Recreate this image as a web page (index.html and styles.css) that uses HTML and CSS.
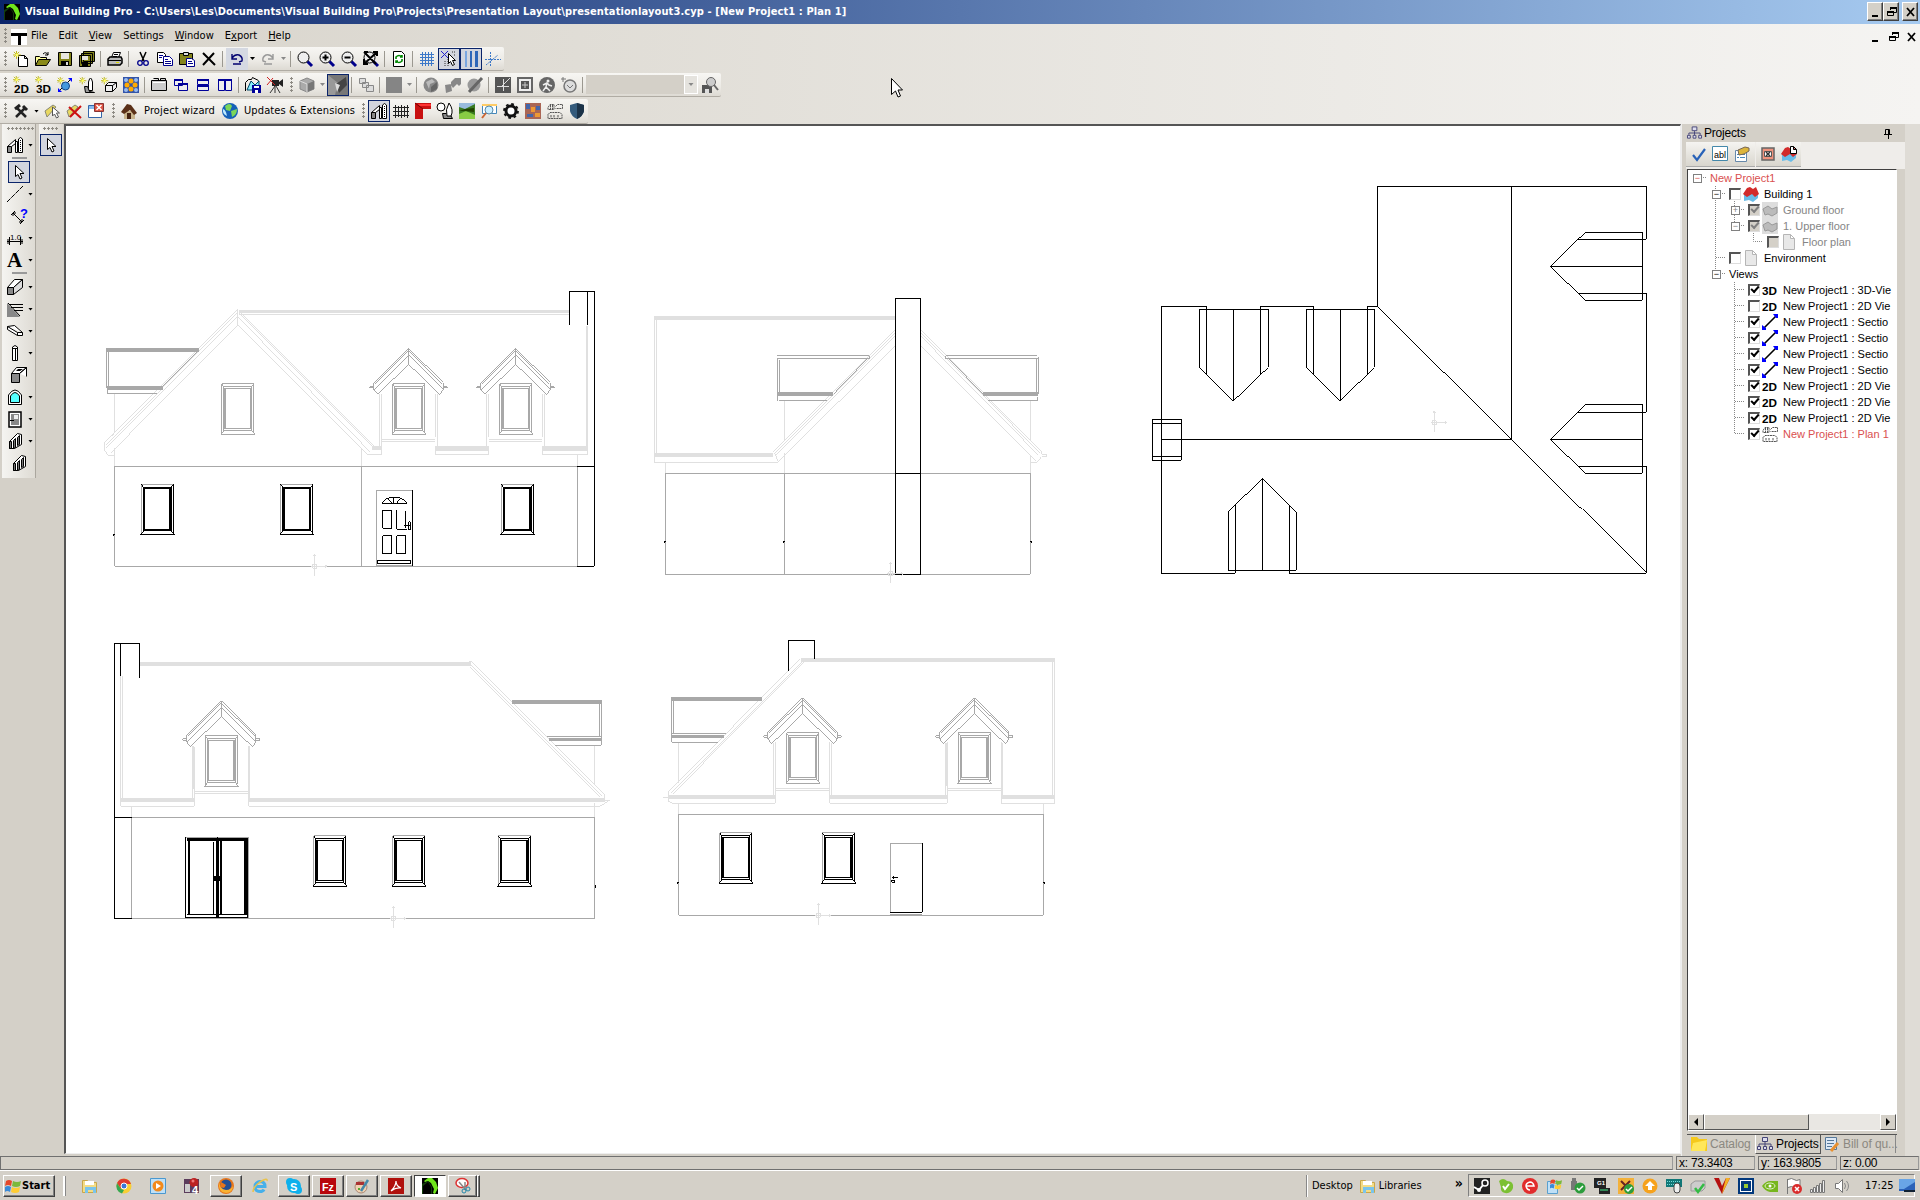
FILE: index.html
```html
<!DOCTYPE html>
<html lang="en">
<head>
<meta charset="utf-8">
<title>Visual Building Pro</title>
<link rel="stylesheet" href="styles.css">
</head>
<body>
<svg class="sprite" width="0" height="0">
<defs>
<symbol id="app" viewBox="0 0 16 16"><path fill="#000" d="M0 0h16v16H0z"/><path fill="#6fe61c" d="M2 3 6 0h4l4 4 2 6-3 6-2-1 1-4-3-6-3-2-3 1z"/><path fill="#123c0a" d="m0 6 6-3 4 6v7H0z"/><path d="m1 8 5-4 3 5v7H1z"/></symbol>
<symbol id="spark" viewBox="0 0 16 16"><path stroke="#b8b000" d="M4 0v9M0 4.500h9M1 1l6 6M7 1 1 7"/><path fill="#ff6" d="M3 3h3v3H3z"/></symbol>
<symbol id="new" viewBox="0 0 16 16"><path fill="#fff" stroke="#000" d="M5.500 4.500h6l3 3v8h-9zM11.500 4.500v3h3"/><use href="#spark" width="14" height="14"/></symbol>
<symbol id="open" viewBox="0 0 16 16"><path fill="#ff9" stroke="#000" d="M.5 14.500v-9h4l1 1h6v2"/><path fill="#8a8a18" stroke="#000" d="m.5 14.500 3-6h12l-4 6z"/><path fill="none" stroke="#000" d="M8 3q3-3 5 1m0-3v3h-3"/></symbol>
<symbol id="save" viewBox="0 0 16 16"><path fill="#84841c" stroke="#000" d="M1.500 1.500h13v13h-13z"/><path fill="#e8e6df" d="M4 2h8v6H4z"/><path d="M4 10h8v4H4z"/><path fill="#ddd" d="M9 11h2v3H9z"/></symbol>
<symbol id="saveall" viewBox="0 0 16 16"><path fill="#84841c" stroke="#000" d="M4.500.5h11v10h-11zM2.500 2.500h11v10h-11zM.5 4.500h11v11H.5z"/><path fill="#e8e6df" d="M3 5h6v4H3z"/><path d="M3 11h6v4H3z"/></symbol>
<symbol id="print" viewBox="0 0 16 16"><path fill="#fff" stroke="#000" d="m4.500 6.500 2-5h7l-2 5"/><path fill="#bbb" stroke="#000" stroke-width="1.500" d="M1 8l2-2h11l1 2v4l-2 2H1z"/><path stroke="#000" d="M1 9.500h13M7 3.500h4M6 5.500h4"/><path fill="#dd0" d="M9 11h3v1H9z"/></symbol>
<symbol id="cut" viewBox="0 0 16 16"><path stroke="#000" stroke-width="1.500" d="m5 1 4 9M11 1 7 10"/><g fill="none" stroke="#00008b" stroke-width="1.300"><circle cx="5" cy="12" r="2.300"/><circle cx="11" cy="12" r="2.300"/></g></symbol>
<symbol id="copy" viewBox="0 0 16 16"><path fill="#fff" stroke="#000" d="M.5 1.500h6l2 2v8h-8z"/><path fill="#fff" stroke="#00008b" d="M6.500 5.500h6l3 3v6h-9z"/><path stroke="#00008b" d="M2 4.500h4M2 6.500h3M8 8.500h3M8 10.500h6M8 12.500h6"/></symbol>
<symbol id="paste" viewBox="0 0 16 16"><path fill="#84841c" stroke="#000" d="M.5 2.500h13v11H.5z"/><path fill="#ddd" stroke="#000" d="M4.500 1.500h5v3h-5z"/><path fill="#fff" stroke="#00008b" d="M7.500 7.500h5l3 2v6h-8z"/><path stroke="#00008b" d="M9 10.500h4M9 12.500h5"/></symbol>
<symbol id="del" viewBox="0 0 16 16"><path stroke="#000" stroke-width="2" d="m2 2 12 12M13 2 2 14"/></symbol>
<symbol id="undo" viewBox="0 0 16 16"><path fill="none" stroke="currentColor" stroke-width="1.400" d="M3 7q3-4 7-3 4 2 3 6l-3 1M3 3v5h5M4 13h8"/></symbol>
<symbol id="mag" viewBox="0 0 16 16"><path stroke="#00008b" stroke-width="3" d="m10 10 5 5"/><circle cx="6.500" cy="6.500" r="5.500" fill="#eee" stroke="#000"/></symbol>
<symbol id="magp" viewBox="0 0 16 16"><use href="#mag"/><path stroke="#000" stroke-width="2" d="M3.500 6.500h6M6.500 3.500v6"/></symbol>
<symbol id="magm" viewBox="0 0 16 16"><use href="#mag"/><path stroke="#000" stroke-width="2" d="M3.500 6.500h6"/></symbol>
<symbol id="maga" viewBox="0 0 16 16"><use href="#mag"/><path stroke="#000" stroke-width="2" d="m1 1 12 12M14 1 1 13M1 1h4M10 1h4v4M1 8v5h4"/></symbol>
<symbol id="refresh" viewBox="0 0 16 16"><path fill="#fff" stroke="#000" d="M2.500.5h8l3 3v12h-11z"/><path fill="none" stroke="#080" stroke-width="1.600" d="M5 8V6q3-3 6 0M9 6h2V4M11 8v2q-3 3-6 0m2 0H5v2"/></symbol>
<symbol id="grid" viewBox="0 0 16 16"><path stroke="#3c78c8" d="M1 3.500h14M1 6.500h14M1 9.500h14M1 12.500h14M3.500 1v14M6.500 1v14M9.500 1v14M12.500 1v14"/></symbol>
<symbol id="snap" viewBox="0 0 16 16"><path stroke="#22c" d="m0 0 7 7M7 0 0 7"/><path stroke="#333" stroke-dasharray="1 1" d="M4 15V9M7 15V8M11 1h4M13 4h2"/><path fill="#fff" stroke="#000" d="m7.500 2.500 0 10 2-2 2 4 2-1-2-4h3z"/></symbol>
<symbol id="cols" viewBox="0 0 16 16"><path fill="#7aa6e0" d="M2 0h2v16H2z"/><path fill="#2e66b8" d="M7 0h2v16H7zM12 0h3v16h-3z"/></symbol>
<symbol id="axis" viewBox="0 0 16 16"><path stroke="#3c78c8" stroke-dasharray="2 1" d="M5.500 1v14M0 8.500h16M1 14 13 4"/></symbol>
<symbol id="d2" viewBox="0 0 16 16"><use href="#spark" y="-1" width="13" height="13"/><text class="it" x="1" y="16" textLength="15" lengthAdjust="spacingAndGlyphs">2D</text></symbol>
<symbol id="d3" viewBox="0 0 16 16"><use href="#spark" y="-1" width="13" height="13"/><text class="it" x="1" y="16" textLength="15" lengthAdjust="spacingAndGlyphs">3D</text></symbol>
<symbol id="sec" viewBox="0 0 16 16"><use href="#spark" width="13" height="13"/><path stroke="#000" d="M2 14 14 2"/><circle cx="8.500" cy="9" r="4" fill="#49d" stroke="#148"/><path fill="#00f" d="M11 1h4v4zM1 11v4h4z"/></symbol>
<symbol id="plan" viewBox="0 0 16 16"><use href="#spark" width="13" height="13"/><path fill="#fff" stroke="#000" d="M9.500 13.500V5q2-8 4 0v8.500z"/><path fill="#999" stroke="#000" d="M5.500 9.500h3l2 5 5 1h-9z"/></symbol>
<symbol id="box" viewBox="0 0 16 16"><use href="#spark" width="13" height="13"/><path fill="#eee" stroke="#000" d="m4.500 8.500 3-3h8v5l-4 4h-7zM4.500 8.500h7v6m0-6 4-3"/></symbol>
<symbol id="dots" viewBox="0 0 16 16"><path fill="#35a" d="M0 0h16v16H0z"/><g fill="#9be"><circle cx="3" cy="3" r="2"/><circle cx="13" cy="3" r="2"/><circle cx="3" cy="13" r="2"/><circle cx="13" cy="13" r="2"/></g><g fill="#fa0"><circle cx="8" cy="4" r="2.500"/><circle cx="4" cy="8" r="2.500"/><circle cx="12" cy="8" r="2.500"/><circle cx="8" cy="12" r="2.500"/></g></symbol>
<symbol id="win1" viewBox="0 0 16 16"><path fill="#ccc" stroke="#000" d="M.5 3.500h15v10H.5zM2.500 1.500h5v2M9.500 3.500v-2h5v2"/><path stroke="#fff" d="M2 5.500h12"/></symbol>
<symbol id="casc" viewBox="0 0 16 16"><path fill="#eee" stroke="#009" d="M1.500 2.500h8v6h-8zM5.500 6.500h9v7h-9z"/><path stroke="#009" stroke-width="2" d="M1 3h9M5 7h10"/></symbol>
<symbol id="horz" viewBox="0 0 16 16"><path fill="#eee" stroke="#009" d="M2.500 2.500h11v5h-11zM2.500 9.500h11v4h-11z"/><path stroke="#009" stroke-width="2" d="M2 3h12M2 9h12"/></symbol>
<symbol id="vert" viewBox="0 0 16 16"><path fill="#eee" stroke="#009" d="M1.500 2.500h6v11h-6zM8.500 2.500h6v11h-6z"/><path stroke="#009" stroke-width="2" d="M1 3h14"/></symbol>
<symbol id="pic" viewBox="0 0 16 16"><path fill="none" stroke="#000" d="M.5 14V5.500l3-3h3l1-2 6 3"/><path fill="#8ef" stroke="#046" d="m2 13 4-9 4 4 4-4v9z"/><path fill="#009" d="M7 8h9v8H7z"/><path fill="#fff" d="M9 9h5v2H9zM10 13h3v3h-3z"/></symbol>
<symbol id="cam" viewBox="0 0 16 16"><path fill="#222" d="M5 3h7v6H5zM12 5l4-3v8l-4-3z"/><path stroke="#333" d="M8 9 3 16M9 9l4 7M8 9v7"/><path stroke="#c22" d="m0 0 8 8M6 1 0 8"/></symbol>
<symbol id="cube" viewBox="0 0 16 16"><path fill="#aaa" stroke="#888" d="m1 4 7-3 7 3v8l-7 3-7-3z"/><path fill="#777" d="m8 7 7-3v8l-7 3z"/><path stroke="#ddd" d="M1 4l7 3v8"/></symbol>
<symbol id="gpic" viewBox="0 0 20 20"><path fill="#777" d="M0 0h20v20H0z"/><path fill="#999" d="m0 0 10 8-3 12H0z"/><path fill="#444" d="m8 9 10-7 1 8-8 8z"/><path fill="#ddd" d="m7 8 5 2-3 7z"/></symbol>
<symbol id="gcasc" viewBox="0 0 16 16"><path fill="#ddd" stroke="#888" d="M1.500 1.500h6v5h-6zM4.500 5.500h6v5h-6zM8.500 8.500h7v6h-7z"/></symbol>
<symbol id="gsq" viewBox="0 0 16 16"><path fill="#858585" d="M0 0h16v16H0z"/></symbol>
<symbol id="gball" viewBox="0 0 16 16"><circle cx="8" cy="8" r="7.500" fill="#888"/><path fill="#bbb" d="M3 5 9 2l3 3-5 2-1 5z"/><path fill="#666" d="m8 10 6-5v7l-6 3z"/></symbol>
<symbol id="garr" viewBox="0 0 16 16"><path fill="#888" d="m0 8 6-1 1 7-6 2zM6 5 10 1h6v6l-2 2-2-2-4 4-2-3z"/></symbol>
<symbol id="gpen" viewBox="0 0 16 16"><circle cx="7" cy="8" r="6.500" fill="#999"/><path stroke="#666" stroke-width="3" d="M2 15 15 1"/></symbol>
<symbol id="gax" viewBox="0 0 16 16"><path fill="#555" d="M0 0h16v16H0z"/><path stroke="#ddd" d="M8.500 2v12M2 9.500h12M7 9l8-8"/></symbol>
<symbol id="gtar" viewBox="0 0 16 16"><path fill="#eee" stroke="#666" stroke-width="2" d="M1 1h14v14H1z"/><path fill="#555" d="M4 4h8v8H4z"/><path stroke="#ccc" d="M8 5v6M5 8h6"/></symbol>
<symbol id="gwalk" viewBox="0 0 16 16"><circle cx="8" cy="8" r="8" fill="#666"/><circle cx="9" cy="4" r="1.500" fill="#eee"/><path fill="none" stroke="#eee" stroke-width="1.500" d="M4 8l4-2 2 2 3 1M8 6l-1 4-3 4M7 10l4 4"/></symbol>
<symbol id="gclk" viewBox="0 0 16 16"><circle cx="9" cy="9" r="6" fill="#ddd" stroke="#777" stroke-width="1.500"/><path stroke="#777" d="M6 8l3 3 3-3M0 2h5M2 0v5"/></symbol>
<symbol id="gfind" viewBox="0 0 16 16"><path fill="#555" d="M0 8h10v8H0z"/><path fill="#ddd" d="M3 12h4v4H3z"/><circle cx="9" cy="5" r="4.500" fill="#ccc" stroke="#666"/><path stroke="#666" stroke-width="2" d="m12 8 4 5"/></symbol>
<symbol id="ham" viewBox="0 0 16 16"><path stroke="#222" stroke-width="2.500" d="M4 5l9 9M12 5 3 14"/><path stroke="#222" stroke-width="3" d="M2 6l5-4M10 3l4 4"/></symbol>
<symbol id="ycur" viewBox="0 0 16 16"><path fill="#e8d860" stroke="#887" d="m1 8 8-6 3 2-9 10z"/><path fill="#fff" stroke="#555" d="M8.500 4v9l2-2 2 4 2-1-2-4h3z"/></symbol>
<symbol id="ydel" viewBox="0 0 16 16"><path fill="#e8d860" stroke="#887" d="m1 8 8-6 3 2-9 10z"/><path stroke="#c11" stroke-width="2" d="m3 4 12 11M15 3 4 14"/></symbol>
<symbol id="wclose" viewBox="0 0 16 16"><path fill="#fff" stroke="#36a" d="M.5 2.500h13v12H.5z"/><path fill="#8be" d="M1 3h12v3H1z"/><path fill="#d54" stroke="#833" d="M6.500.5h9v8h-9z"/><path stroke="#fff" stroke-width="1.500" d="m8.500 2 5 5m0-5-5 5"/></symbol>
<symbol id="house" viewBox="0 0 16 16"><path fill="#c8b48c" d="M3 8h11v8H3z"/><path fill="#5a3018" d="M0 9 6 1l4 1 6 8-3 2-4-5-6 4z"/><path fill="#421" d="M6 10h4v6H6z"/></symbol>
<symbol id="globe" viewBox="0 0 16 16"><circle cx="8" cy="8" r="8" fill="#1560b8"/><path fill="#7cd65a" d="M3 3q5-4 7 0L8 8 4 7zM9 8l6-2q0 6-5 8z"/><path fill="#bdeaff" d="M1 6q3 1 4 7Q0 11 1 6z"/></symbol>
<symbol id="walls" viewBox="0 0 16 16"><path fill="#888" stroke="#000" d="M.5 9.500h4v6h-4z"/><path fill="#fff" stroke="#000" d="m.5 9.500 8-7v4l-4 3zM8.500 4.500h2v11h-2z"/><path fill="#fff" stroke="#000" d="M11.500 2q2-3 4 0v13.500h-4z"/><path stroke="#000" stroke-dasharray="1 1" d="M13.500 3v12"/></symbol>
<symbol id="fence" viewBox="0 0 16 16"><path stroke="#222" d="M0 4.500h16M0 8.500h16M0 12.500h16M2.500 2v13M5.500 3v11M8.500 2v13M11.500 3v11M14.500 2v13"/></symbol>
<symbol id="roof" viewBox="0 0 16 16"><path fill="#c81010" d="M0 0h16v6H8v10H0z"/><path stroke="#700" d="m0 0 8 6"/><path fill="#f33" d="M3 1h13v2H5z"/></symbol>
<symbol id="tree" viewBox="0 0 16 16"><circle cx="4" cy="4" r="4" fill="#fff" stroke="#000"/><path fill="#888" stroke="#000" d="M5.500 10.500h7l3 5h-9z"/><path fill="#fff" stroke="#000" d="M12 0q5 7 2 13h-4q-2-6 2-13"/></symbol>
<symbol id="land" viewBox="0 0 16 16"><path fill="#9bd" d="M0 0h16v16H0z"/><path fill="#3a7a20" d="m0 4 6 2 10-5v15H0z"/><path fill="#8c4" d="m0 11 7-3 9 4v4H0z"/><path fill="#240" d="M0 8l6-2 9-1v4l-9-1z"/></symbol>
<symbol id="wmag" viewBox="0 0 16 16"><path fill="#fff" stroke="#48b" d="M1.500 1.500h14v9h-14z"/><path fill="#fc6" d="M1 1h15v2H1z"/><circle cx="8" cy="7" r="4" fill="#cef" stroke="#58a"/><path stroke="#c63" stroke-width="2" d="m5 10-4 5"/></symbol>
<symbol id="gear" viewBox="0 0 16 16"><circle cx="8" cy="8" r="5" fill="#fff" stroke="#111" stroke-width="3"/><circle cx="8" cy="8" r="7" fill="none" stroke="#111" stroke-width="1.800" stroke-dasharray="2.700 2.800"/></symbol>
<symbol id="quilt" viewBox="0 0 16 16"><path fill="#a65" d="M0 0h16v16H0z"/><path fill="#46a" d="M1 1h4v5H1zM11 3h4v4h-4zM2 11h6v3H2z"/><path fill="#e93" d="M6 4h4v5H6zM10 10h5v4h-5z"/></symbol>
<symbol id="lay" viewBox="0 0 16 16"><path fill="none" stroke="#555" stroke-dasharray="2 .6" d="m1 4.500 2-3h4v5H1zM8.500 3.500l2-2h5v4h-7M1 11.500l2-2h10l2 2v4H1zM4 12v3M7 12v3M11 12v3M3.500 2v4M5.500 2v4"/></symbol>
<symbol id="shield" viewBox="0 0 16 16"><path fill="#345b7c" d="m8 0 7 2v6q-1 5-7 8-6-3-7-8V2z"/><path fill="#1c3348" d="m8 0 7 2v6q-1 5-7 8z"/></symbol>
<symbol id="arrow" viewBox="0 0 16 16"><path fill="#fff" stroke="#000" d="M4.500 1.500v11l2.500-2 2 4.500 2-1-2-4.500h4z"/></symbol>
<symbol id="line" viewBox="0 0 16 16"><path stroke="#000" stroke-dasharray="5 1" d="M0 16 16 0"/></symbol>
<symbol id="dim" viewBox="0 0 16 16"><path stroke="#000" d="M2 5l9 9M0 7l4-4M9 16l4-4M2 5h3M2 5v3M11 14v-3M11 14H8"/><text class="q" x="9" y="10">?</text></symbol>
<symbol id="meas" viewBox="0 0 16 16"><path stroke="#000" d="M0 11.500h16M2.500 7v8M13.500 7v8M1 9v5M15 9v5"/><text class="m" x="3" y="10">1.0</text></symbol>
<symbol id="bigA" viewBox="0 0 16 16"><text class="A" x="0" y="15">A</text></symbol>
<symbol id="wall" viewBox="0 0 16 16"><path fill="#fff" stroke="#000" d="m.5 8.500 7-8h8l-9 8z"/><path fill="#ddd" stroke="#000" d="m6.500 8.500 9-8v8l-9 7z"/><path fill="#888" stroke="#000" d="M.5 8.500h6v7h-6z"/></symbol>
<symbol id="roofl" viewBox="0 0 16 16"><path fill="#888" d="M0 2v14h13z"/><path stroke="#000" d="M1 2l12 13M2 3.500h14M4 6.500h12M7 9.500h9"/></symbol>
<symbol id="slab" viewBox="0 0 16 16"><path fill="#fff" stroke="#000" d="m.5 3.500 7-1 8 7v3h-5l-10-6zM.5 3.500l10 6h5M10.500 9.500v3"/></symbol>
<symbol id="post" viewBox="0 0 16 16"><path fill="#fff" stroke="#000" d="M5.500 2q2.500-3 5 0v13.500h-5z"/><path stroke="#000" d="M8.500 3v12M6 3.500h4"/></symbol>
<symbol id="open3" viewBox="0 0 16 16"><path fill="#888" stroke="#000" d="M.5 6.500h8v9h-8z"/><path fill="#fff" stroke="#000" d="m.5 6.500 5-6h10l-7 6zM8.500 6.500l7-6v9"/><path d="m5 4 2-2h5l-3 2z"/></symbol>
<symbol id="arch" viewBox="0 0 16 16"><path fill="#fff" stroke="#000" d="M1.500 15.500V6q6.500-10 13 0v9.500z"/><path fill="#5ff" stroke="#000" d="M3.500 13.500V7q4.500-7 9 0v6.500z"/></symbol>
<symbol id="door" viewBox="0 0 16 16"><path fill="#fff" stroke="#000" stroke-width="1.500" d="M2 1h12v15H2z"/><path fill="#888" d="M4 3h8v11H4z"/><path fill="#eee" d="M7 4h4v4H7z"/><path d="M3 9h4v1H3z"/></symbol>
<symbol id="stair" viewBox="0 0 16 16"><path fill="#fff" stroke="#000" d="m2.500 8.500 8-8 4 1v10l-7 4h-5z"/><path fill="#777" stroke="#000" d="M2.500 8.500h2v7h-2zM6.500 7.500l2-2v9l-2 1zM10.500 4.500l2-2v9l-2 1z"/></symbol>
<symbol id="fl" viewBox="0 0 16 16"><path fill="#69bce8" d="m1 8 5-3 4 3 5-2v6l-5 4-4-2-5 1z"/><path fill="#d22b2b" d="m0 8 4-6 3-1 3 2 3-2 3 7-4 3-3-3-5 3z"/></symbol>
<symbol id="flg" viewBox="0 0 16 16"><path fill="#ddd" d="M0 0h16v16H0z"/><path fill="#bbb" stroke="#999" d="m1 7 5-3 4 3 5-2v6l-5 3-4-2-3 1z"/></symbol>
<symbol id="page" viewBox="0 0 16 16"><path fill="#e8e8e8" stroke="#b5b5b5" d="M2.500.5h7l4 4v11h-11zM9.500.5v4h4"/></symbol>
<symbol id="t3" viewBox="0 0 16 16"><text class="it" x="0" y="13" textLength="15" lengthAdjust="spacingAndGlyphs">3D</text></symbol>
<symbol id="t2" viewBox="0 0 16 16"><text class="it" x="0" y="13" textLength="15" lengthAdjust="spacingAndGlyphs">2D</text></symbol>
<symbol id="sl" viewBox="0 0 16 16"><path stroke="#000" stroke-width="1.600" d="M1 15 15 1"/><path fill="#00f" d="M11 0h5v4h-2zM0 11v5h4v-2z"/></symbol>
<symbol id="org" viewBox="0 0 16 16"><path fill="#dde" stroke="#447" d="M5.500 1.500h5v4h-5zM.5 10.500h3v3h-3zM6.500 10.500h3v3h-3zM12.500 10.500h3v3h-3z"/><path fill="none" stroke="#447" d="M8 6v4M2 10V8h12v2"/></symbol>
<symbol id="tick" viewBox="0 0 16 16"><path fill="none" stroke="#2862b8" stroke-width="2.200" d="m2 9 4 5 8-11"/></symbol>
<symbol id="abl" viewBox="0 0 16 16"><path fill="#fff" stroke="#48a" d="M.5.5h15v14H.5z"/><text class="ab" x="2" y="12">abl</text></symbol>
<symbol id="prop" viewBox="0 0 16 16"><path fill="#fff" stroke="#68a" d="M1.500 4.500h11v11h-11z"/><path stroke="#48b" d="M3 8.500h2M6 8.500h5M3 11.500h2M6 11.500h5"/><path fill="#dcb53c" stroke="#765" d="m4 4 7-3 4 1v3l-5 3-5 1z"/></symbol>
<symbol id="rx" viewBox="0 0 16 16"><path fill="#ef927c" stroke="#666" stroke-width="1.500" d="M2 2h12v12H2z"/><path fill="#fff" stroke="#555" d="M4.500 5.500h7v5h-7z"/><path stroke="#333" stroke-width="1.500" d="m6 6 4 4m0-4-4 4"/></symbol>
<symbol id="flp" viewBox="0 0 16 16"><use href="#fl"/><path fill="#fff" stroke="#000" d="M9.500.5h3l3 3v4h-6zM12.500.5v3h3"/></symbol>
<symbol id="folder" viewBox="0 0 16 16"><path fill="#f6c91c" d="M0 1h6l2 2h8v12H0z"/><path fill="#ffe75a" d="m2 7 14-3-2 11H0z"/></symbol>
<symbol id="bill" viewBox="0 0 16 16"><path fill="#dce8f6" stroke="#579" d="M1.500 1.500h11v12h-11z"/><path stroke="#579" d="M3 4.500h7M3 7.500h7M3 10.500h5"/><path stroke="#e89030" stroke-width="3" d="m7 15 7-8"/></symbol>
<symbol id="flag" viewBox="0 0 16 16"><path fill="#e6482a" d="M1 3q3-2 6 0L6 8Q3 6 0 8z"/><path fill="#7bb93c" d="M8 3q4 2 8 0l-1 5q-4 2-8 0z"/><path fill="#3a8ad8" d="M0 9q3-2 6 0l-1 5q-3-2-5 0z"/><path fill="#fc3" d="M7 9q3 2 8 0l-1 5q-4 2-8 0z"/></symbol>
<symbol id="expl" viewBox="0 0 16 16"><path fill="#f3dc86" stroke="#c9a64a" d="M.5 2.500h5l1 2h8v10H.5z"/><path fill="#fff" d="M3 3h9v4H3z"/><path fill="#79c4ec" d="M3 9h11v6h-3v-3H6v3H3z"/></symbol>
<symbol id="chrome" viewBox="0 0 16 16"><circle cx="8" cy="8" r="7.500" fill="#f8cf35"/><path fill="#e03c31" d="M1 5a7.500 7.500 0 0 1 14 1H8l-3 5z"/><path fill="#36a852" d="m1 5 4 6 3 1-2 3.500A7.500 7.500 0 0 1 1 5"/><circle cx="8" cy="8" r="3" fill="#3b78d8" stroke="#fff"/></symbol>
<symbol id="wmp" viewBox="0 0 16 16"><path fill="#bfe0f7" stroke="#4a98cf" d="M.5.5h15v15H.5z"/><circle cx="8" cy="8" r="5.500" fill="#f18a1d"/><path fill="#fff" d="m6 5 5 3-5 3z"/></symbol>
<symbol id="p4" viewBox="0 0 16 16"><path fill="#5b3c5c" d="M0 1h15v14H0z"/><path fill="#ccc" d="M1 6h5v8H1z"/><circle cx="10" cy="4.500" r="4.500" fill="#b22"/><circle cx="9" cy="3" r="1.500" fill="#e77"/><text class="w" x="8" y="16">4</text></symbol>
<symbol id="ff" viewBox="0 0 16 16"><circle cx="8" cy="8" r="8" fill="#e8761b"/><circle cx="8" cy="7" r="5.500" fill="#234f93"/><path fill="#f9b233" d="M1 4q1 7 7 8 6 0 7-5 0 8-7 8Q0 15 1 4"/><path fill="#e8761b" d="m3 4 5 3-2 3-4-1z"/></symbol>
<symbol id="ie" viewBox="0 0 16 16"><path fill="none" stroke="#46b0ea" stroke-width="3" d="M3 8.500h10q0-5-5-5-5 1-5 5 0 5 5 5 3 0 4-2"/><path fill="none" stroke="#eac34a" stroke-width="1.500" d="M1 14Q1 9 8 4q8-5 7-1"/></symbol>
<symbol id="skype" viewBox="0 0 16 16"><circle cx="8" cy="8" r="7" fill="#0db0ec"/><circle cx="4" cy="4" r="4" fill="#0db0ec"/><circle cx="12" cy="12" r="4" fill="#0db0ec"/><text class="w" x="4" y="12.500">S</text></symbol>
<symbol id="fz" viewBox="0 0 16 16"><path fill="#b8060c" d="M0 0h16v16H0z"/><text class="w" x="2" y="12.500" textLength="12" lengthAdjust="spacingAndGlyphs">Fz</text></symbol>
<symbol id="paint" viewBox="0 0 16 16"><circle cx="7" cy="9" r="6" fill="#f0d2b0" stroke="#a87"/><path fill="#a33" d="M2 4h8v3H2z"/><path stroke="#48a" stroke-width="2.500" d="m7 13 7-11"/><path fill="#5a3" d="M4 10h2v2H4z"/></symbol>
<symbol id="pdf" viewBox="0 0 16 16"><path fill="#b0100c" d="M0 0h16v16H0z"/><path fill="none" stroke="#fff" stroke-width="1.200" d="M3 13Q8 8 8 3q0 5 5 7-5-1-10 3"/></symbol>
<symbol id="snip" viewBox="0 0 16 16"><ellipse cx="7" cy="5" rx="6" ry="4.500" fill="#fff" stroke="#d33" stroke-width="1.500"/><path stroke="#888" stroke-width="1.500" d="m4 4 7 8M10 4l0 8"/><circle cx="9" cy="13" r="2" fill="none" stroke="#28a"/><circle cx="13" cy="11" r="2" fill="none" stroke="#28a"/></symbol>
<symbol id="steam" viewBox="0 0 16 16"><path fill="#222" d="M0 0h16v16H0z"/><circle cx="11" cy="5" r="3" fill="none" stroke="#fff" stroke-width="1.500"/><circle cx="5" cy="12" r="2" fill="#fff"/><path stroke="#fff" stroke-width="2" d="m0 9 5 3 4-5"/></symbol>
<symbol id="gchk" viewBox="0 0 16 16"><path fill="#7cc033" d="M1 3q4-4 8 0 7 0 6 7-2 6-8 5-5-1-4-6z"/><path fill="none" stroke="#fff" stroke-width="2" d="m5 8 2 3 4-5"/></symbol>
<symbol id="red" viewBox="0 0 16 16"><circle cx="8" cy="8" r="8" fill="#e12c2c"/><path fill="none" stroke="#fff" stroke-width="1.500" d="M4 8h8q-1-4-4-4-4 1-4 4 1 4 4 4"/></symbol>
<symbol id="wu" viewBox="0 0 16 16"><path fill="#bfe0f7" stroke="#5aa0cf" d="M1.500 3.500h10v12h-10z"/><svg x="4" y="0" width="12" height="12" viewBox="0 0 16 16"><use href="#flag"/></svg></symbol>
<symbol id="usb" viewBox="0 0 16 16"><path fill="#777" d="M1 3h6v9H1zM2 0h4v3H2z"/><circle cx="10" cy="10" r="5.500" fill="#2c9c3c"/><path fill="none" stroke="#fff" stroke-width="1.500" d="m7 10 2 2 4-4"/></symbol>
<symbol id="g1" viewBox="0 0 16 16"><path fill="#222" d="M0 0h12v10H0zM5 10h11v6H5z"/><path fill="#385" d="M6 11h8v2H6z"/><text class="s" x="3" y="7">G1</text></symbol>
<symbol id="bird" viewBox="0 0 16 16"><path fill="#f3b13a" d="M0 0h16v16H0z"/><path stroke="#622" stroke-width="2" d="m3 3 9 9M12 3 3 12"/><circle cx="11" cy="11" r="5" fill="#2c9c3c"/><path fill="none" stroke="#fff" stroke-width="1.500" d="m8 11 2 2 4-4"/></symbol>
<symbol id="up" viewBox="0 0 16 16"><circle cx="8" cy="8" r="7.500" fill="#f6a21c"/><path fill="#fff" d="m8 3 5 5h-3v4H6V8H3z"/></symbol>
<symbol id="kb" viewBox="0 0 16 16"><path fill="#177" d="M0 1h16v8H0z"/><path stroke="#7dd" stroke-dasharray="1 1" d="M1 3.500h14M1 6.500h14"/><rect x="8" y="5" width="6" height="10" rx="3" fill="#eee" stroke="#444"/></symbol>
<symbol id="drv" viewBox="0 0 16 16"><path fill="#ccc" stroke="#999" d="m1 6 4-3h10v7l-3 3H1z"/><path fill="none" stroke="#3b4" stroke-width="2.500" d="m5 10 3 4 6-8"/></symbol>
<symbol id="vv" viewBox="0 0 16 16"><path fill="#b41010" d="M0 0h5l3 8 4-8h4L8 16z"/><path fill="#f4b024" d="m12 0h4L8 16l1-5z"/></symbol>
<symbol id="bsq" viewBox="0 0 16 16"><path fill="#fff" stroke="#02387c" stroke-width="2" d="M1 1h14v14H1z"/><path fill="#02387c" d="M3 3h10v10H3z"/><path fill="#9c3" d="M6 6h4v4H6z"/></symbol>
<symbol id="nv" viewBox="0 0 16 16"><path fill="#77b61d" d="M0 8q4-5 8-5h8v11H8Q3 13 0 8"/><ellipse cx="8" cy="8" rx="5" ry="3" fill="none" stroke="#dec"/><circle cx="8" cy="8" r="1.500" fill="#fff"/></symbol>
<symbol id="fx" viewBox="0 0 16 16"><path fill="#fff" stroke="#777" d="M1.500 1v15M2 1.500q4-2 6 0t6 0v8q-4 2-6 0t-6 0"/><circle cx="11" cy="11" r="5" fill="#d92c2c"/><path stroke="#fff" stroke-width="1.500" d="m9 9 4 4m0-4-4 4"/></symbol>
<symbol id="sig" viewBox="0 0 16 16"><path fill="#eee" stroke="#777" d="M.5 11.500h2v3h-2zM3.500 9.500h2v5h-2zM6.500 7.500h2v7h-2zM9.500 5.500h2v9h-2zM12.500 2.500h2v12h-2z"/></symbol>
<symbol id="spk" viewBox="0 0 16 16"><path fill="#fff" stroke="#777" d="M1.500 5.500h3l4-4v13l-4-4h-3z"/><path fill="none" stroke="#888" d="M10.500 5q2 3 0 6M12.500 3q4 5 0 10"/></symbol>
<symbol id="desk" viewBox="0 0 16 16"><path fill="#2b62b8" d="M0 1h16v12H0z"/><path fill="#69a5e6" d="m0 1 16 0v3L5 11H0z"/><path fill="#123" d="M5 12h11v2H5z"/></symbol>
<symbol id="min" viewBox="0 0 16 16"><path d="M4 11h6v2H4z"/></symbol>
<symbol id="rest" viewBox="0 0 16 16"><path fill="none" stroke="#000" d="M6.500 6V3.500h6v5H10M3.500 7.500h6v4h-6z"/><path stroke="#000" stroke-width="2" d="M6 4h7M3 8h7"/></symbol>
<symbol id="x" viewBox="0 0 16 16"><path stroke="#000" stroke-width="1.800" d="m4 4 7 8M11 4 4 12"/></symbol>

<g id="win">
<path class="mid" d="M0 149V0H97"/><path d="M97 0V145M-3 152H101M0 0 6 9M97 0 90 9M7 140-2 151M90 140 100 151M7 9H90V140H7Z"/><path stroke-width="6" d="M9 12V136M87 12V136"/><path d="M10 14H86M7 135H90"/>
</g>
<g id="dormer">
<path class="lt" d="M-86 137V295M-82 137V265M82 137V265M86 137V295M-80 273H80M-80 280H80"/>
<path class="mid" d="M-2 2-104 103V124L-93 138 0 48 93 138 104 124V103L2 2M0 7-100 106M0 7 100 106M0 20-104 124M0 20 104 124M0 0V48M-104 115H-116V119H-104M104 115H116V119H104"/>
<use href="#win" class="grey" x="-48" y="106"/>
</g>
<g id="origin"><path class="lt" d="M0-36V28M-10 0H38M-6-6H6V6H-6ZM-4-30 0-36 4-30M32-4 38 0 32 4"/></g>
</defs>
</svg>

<header class="title"><svg class="i"><use href="#app"/></svg><span class="cap">Visual Building Pro - C:\Users\Les\Documents\Visual Building Pro\Projects\Presentation Layout\presentationlayout3.cyp - [New Project1 : Plan 1]</span>
<div class="wb"><b><svg class="i"><use href="#min"/></svg></b><b><svg class="i"><use href="#rest"/></svg></b><b class="cl"><svg class="i"><use href="#x"/></svg></b></div></header>

<div class="bars">
<nav class="menu"><i class="grip"></i><svg class="mi" viewBox="0 0 16 16"><path fill="#fff" d="M0 0h16v16H0z"/><path d="M0 4h16v3H0zM7 7h3v9H7z"/></svg><span>File</span><span>Edit</span><span><u>V</u>iew</span><span>Settings</span><span><u>W</u>indow</span><span>E<u>x</u>port</span><span><u>H</u>elp</span>
<div class="mdi"><svg class="i"><use href="#min"/></svg><svg class="i"><use href="#rest"/></svg><svg class="i"><use href="#x"/></svg></div></nav>

<div class="tb">
<i class="grip"></i><b><svg class="i"><use href="#new"/></svg></b><b><svg class="i"><use href="#open"/></svg></b><b><svg class="i"><use href="#save"/></svg></b><b><svg class="i"><use href="#saveall"/></svg></b><i class="sep"></i><b><svg class="i"><use href="#print"/></svg></b><i class="sep"></i><b><svg class="i"><use href="#cut"/></svg></b><b><svg class="i"><use href="#copy"/></svg></b><b><svg class="i"><use href="#paste"/></svg></b><b><svg class="i"><use href="#del"/></svg></b><i class="sep"></i><b class="hot"><svg class="i navy"><use href="#undo"/></svg></b><i class="dd"></i><b><svg class="i dim flip"><use href="#undo"/></svg></b><i class="dd off"></i><i class="sep"></i><b><svg class="i"><use href="#mag"/></svg></b><b><svg class="i"><use href="#magp"/></svg></b><b><svg class="i"><use href="#magm"/></svg></b><b><svg class="i"><use href="#maga"/></svg></b><i class="sep"></i><b><svg class="i"><use href="#refresh"/></svg></b><i class="sep"></i><b><svg class="i"><use href="#grid"/></svg></b><b class="on"><svg class="i"><use href="#snap"/></svg></b><b class="on"><svg class="i"><use href="#cols"/></svg></b><b><svg class="i"><use href="#axis"/></svg></b>
</div>
<div class="tb">
<i class="grip"></i><b><svg class="i"><use href="#d2"/></svg></b><b><svg class="i"><use href="#d3"/></svg></b><b><svg class="i"><use href="#sec"/></svg></b><b><svg class="i"><use href="#plan"/></svg></b><b><svg class="i"><use href="#box"/></svg></b><b><svg class="i"><use href="#dots"/></svg></b><i class="sep"></i><b><svg class="i"><use href="#win1"/></svg></b><b><svg class="i"><use href="#casc"/></svg></b><b><svg class="i"><use href="#horz"/></svg></b><b><svg class="i"><use href="#vert"/></svg></b><i class="sep"></i><b><svg class="i"><use href="#pic"/></svg></b><b><svg class="i"><use href="#cam"/></svg></b><i class="grip g2"></i><b><svg class="i"><use href="#cube"/></svg></b><i class="dd off"></i><b class="on"><svg class="i big"><use href="#gpic"/></svg></b><i class="sep"></i><b><svg class="i"><use href="#gcasc"/></svg></b><i class="sep"></i><b><svg class="i"><use href="#gsq"/></svg></b><i class="dd off"></i><i class="sep"></i><b><svg class="i"><use href="#gball"/></svg></b><b><svg class="i"><use href="#garr"/></svg></b><b><svg class="i"><use href="#gpen"/></svg></b><i class="sep"></i><b><svg class="i"><use href="#gax"/></svg></b><b><svg class="i"><use href="#gtar"/></svg></b><b><svg class="i"><use href="#gwalk"/></svg></b><b><svg class="i"><use href="#gclk"/></svg></b><i class="sep"></i><div class="combo"><em><i class="dd"></i></em></div><b><svg class="i"><use href="#gfind"/></svg></b>
</div>
<div class="tb t3">
<i class="grip"></i><b><svg class="i"><use href="#ham"/></svg></b><i class="dd"></i><b><svg class="i"><use href="#ycur"/></svg></b><b><svg class="i"><use href="#ydel"/></svg></b><b><svg class="i"><use href="#wclose"/></svg></b><i class="grip g3"></i><b><svg class="i"><use href="#house"/></svg></b><span class="w1">Project wizard</span><b><svg class="i"><use href="#globe"/></svg></b><span class="w2">Updates &amp; Extensions</span><i class="grip g4"></i><b class="on"><svg class="i"><use href="#walls"/></svg></b><b><svg class="i"><use href="#fence"/></svg></b><b><svg class="i"><use href="#roof"/></svg></b><b><svg class="i"><use href="#tree"/></svg></b><b><svg class="i"><use href="#land"/></svg></b><b><svg class="i"><use href="#wmag"/></svg></b><b><svg class="i"><use href="#gear"/></svg></b><b><svg class="i"><use href="#quilt"/></svg></b><b><svg class="i"><use href="#lay"/></svg></b><b><svg class="i"><use href="#shield"/></svg></b>
</div>
<svg class="pointer" viewBox="0 0 12 21" width="12" height="21"><path fill="#fff" stroke="#000" d="M.5.500v16l4-3.500 2.500 6 2.500-1-2.500-6h4.500z"/></svg>
</div>

<main>
<aside class="vt"><i class="hgrip"></i>
<div><svg class="i"><use href="#walls"/></svg><i class="dd"></i></div><hr>
<div><b class="on"><svg class="i"><use href="#arrow"/></svg></b></div>
<div><svg class="i"><use href="#line"/></svg><i class="dd"></i></div>
<div class="sh"><svg class="i"><use href="#dim"/></svg></div>
<div><svg class="i"><use href="#meas"/></svg><i class="dd"></i></div>
<div><svg class="i"><use href="#bigA"/></svg><i class="dd"></i></div><hr>
<div><svg class="i"><use href="#wall"/></svg><i class="dd"></i></div>
<div><svg class="i"><use href="#roofl"/></svg><i class="dd"></i></div>
<div><svg class="i"><use href="#slab"/></svg><i class="dd"></i></div>
<div><svg class="i"><use href="#post"/></svg><i class="dd"></i></div>
<div class="sh"><svg class="i"><use href="#open3"/></svg></div>
<div><svg class="i"><use href="#arch"/></svg><i class="dd"></i></div>
<div><svg class="i"><use href="#door"/></svg><i class="dd"></i></div>
<div><svg class="i"><use href="#stair"/></svg><i class="dd"></i></div>
<div class="sh"><svg class="i"><use href="#stair"/></svg></div>
</aside>
<aside class="vt v2"><i class="hgrip"></i><b class="on"><svg class="i"><use href="#arrow"/></svg></b></aside>

<section class="canvas">
<svg class="draw" viewBox="66 126 1614 1027" width="1614" height="1027">
<!-- front elevation -->
<g transform="translate(95 280) scale(.33333)">
<path class="lt" d="M433 91H1421M433 95H1421M433 98H1421M433 103H1421M428 88 28 488V510L40 526H58M428 98 33 494M428 110 34 504M428 135 46 520M30 486 58 460M433 93 840 500M433 99 836 503M428 110 825 515M428 135 815 522M428 88V135M815 525H860V465M59 340V460M59 505V559M799 505V559M1447 525V559M1478 137V525M1474 137V500"/>
<path class="lt" stroke-width="12" d="M830 505H860M1022 504H1180M1343 504H1478"/>
<path class="lt" d="M1022 498V525H1180V498M1343 498V525H1478M1022 513H1180M1343 513H1478"/>
<path class="mid" d="M59 559H1447V859H59ZM799 559V859M35 211V323M40 217V318M37 328V341H185M308 214 203 318M519 861H527M615 861H627"/>
<path class="mid" stroke-width="12" d="M34 211H312M37 323H203"/>
<path d="M1423 136V34H1498V859H1447M1478 34V136M1447 559H1498M55 764H59M55 764V768"/>
<use href="#dormer" x="941" y="205"/><use href="#dormer" x="1262" y="205"/>
<use href="#win" class="grey" x="380" y="311"/><use href="#win" x="139" y="613"/><use href="#win" x="557" y="613"/><use href="#win" x="1219" y="613"/>
<path class="mid" d="M953 631H845V857H953"/><path d="M953 631V857M847 841H947V850H847ZM861 670Q870 652 898 652 927 652 935 670ZM880 656 890 669M897 652V669M915 656 905 669M863 691H890V745H863ZM905 691V748H936M932 693V745M863 823V767H890V821H863M905 767H932V821H905ZM928 737H945M941 726H946V750H940Z"/>
<use href="#origin" x="659" y="859"/>
</g>
<!-- chimney side elevation -->
<g transform="translate(640 280) scale(.33333)">
<path class="lt" d="M43 108V547H415M49 119V520M766 150 400 516M766 158 404 520M766 168 408 526M766 197 415 545M404 520 415 545M842 150 1205 514M842 158 1200 518M842 168 1196 526M842 197 1187 542M76 547V580M433 360V480M433 520V580M1171 360V480M1171 525V580M1205 514V523H1219V530H1205M1171 547H1190L1205 530"/>
<path class="lt" stroke-width="11" d="M43 114H766M46 525H400"/>
<path class="mid" d="M76 580H1171V883H76ZM433 580V883M412 237V364M418 240V337M418 361H560M688 228V236M680 238 580 343M918 228V236M928 238 1030 343M1189 237V337M1195 232V343M1192 350V364M1045 361H1192"/>
<path class="mid" d="M412 228H688M412 237H688M918 228H1192M918 237H1195"/>
<path class="mid" stroke-width="12" d="M412 343H580M1030 343H1195"/>
<path fill="#fff" d="M766 55H842V883H766ZM766 580H842"/><path d="M72 785H77M430 785H434M1171 785H1175M74 789V785M431 789V785M1174 789V785"/>
<use href="#origin" x="752" y="882"/>
</g>
<!-- roof plan -->
<g transform="translate(1140 170) scale(.33333)">
<path d="M712 409V49H1519V208H1315M1507 187V391H1336L1231 289 1336 187H1507M1231 289H1507M1315 370H1519V727H1315M1507 703V910H1336L1231 808 1336 703H1507M1231 808H1507M1315 889H1519V1210H448V1006M469 1201H265V1026L367 925 469 1026V1201M367 925V1201M286 1006V1210H64V409H199V613M178 418H385V592L280 693 178 592V418M280 418V693M361 613V409H520V613M499 418H703V592L601 693 499 592V418M601 418V693M682 613V409H712L1519 1210M1114 49V808M64 808H1114M37 748H124V871H37ZM37 760H124M37 859H124"/>
<use href="#origin" x="883" y="758"/>
</g>
<!-- rear elevation -->
<g transform="translate(100 630) scale(.33333)">
<path class="lt" d="M62 139V529H283V350M67 139V505M446 350V529H1500L1523 514M1108 96H1116L1515 495V505M1110 103 1506 499M1110 110 1500 502M95 529V562M1484 345V465M1484 520V562M1505 511H1530"/>
<path class="lt" stroke-width="11" d="M121 102H1112M62 511H283M446 511H1515"/>
<path class="mid" d="M95 562H1484V865H95ZM1504 211V346H1365M1498 221V318M1340 319H1504"/>
<path class="mid" stroke-width="11" d="M1235 216H1505M1348 329H1505"/>
<path d="M95 865H43V40H118V143M61 40V139M43 562H95M1484 768H1487V773"/>
<use href="#dormer" x="364" y="212"/>
<use href="#win" x="641" y="617"/><use href="#win" x="878" y="617"/><use href="#win" x="1195" y="617"/>
<path class="mid" d="M257 622H446V865"/><path d="M258 622V864H443V630M262 855H440M352 622V862M342 635V852M361 635V852"/><path stroke-width="9" d="M260 629H443M352 630V860M437 630V856"/><path stroke-width="6" d="M267 630V855M363 630V855"/><path stroke-width="15" d="M341 746H365"/>
<use href="#origin" x="880" y="865"/>
</g>
<!-- gable side elevation -->
<g transform="translate(650 630) scale(.33333)">
<path class="lt" d="M450 86 55 486V514L68 520H376V335M456 95 62 489M463 95 68 492M540 335V520H892V335M1054 335V520H1214V86M1208 95V495M86 340V460M86 520V553M1180 520V553M38 502H55"/>
<path class="lt" stroke-width="11" d="M452 90H1214M55 502H376M540 502H892M1054 502H1214"/>
<path class="mid" d="M86 553H1180V856H86ZM65 205V337H205M71 213V311M65 311H228"/>
<path class="mid" stroke-width="11" d="M64 207H336M64 320H222"/>
<path d="M415 122V31H494V86M82 763V758H86M1180 758H1184V763"/>
<use href="#dormer" x="458" y="203"/><use href="#dormer" x="973" y="203"/>
<use href="#win" x="209" y="608"/><use href="#win" x="517" y="608"/>
<path class="mid" d="M721 847V640H817M721 853H817"/><path d="M817 640V847H721"/><path d="M725 744H743M731 738V748M726 751H735V757H726Z"/>
<use href="#origin" x="505" y="856"/>
</g>
</svg>
</section>

<aside class="panel">
<div class="ph"><svg class="i"><use href="#org"/></svg><span>Projects</span><svg class="pin" viewBox="0 0 8 10" width="8" height="10"><path fill="none" stroke="#000" d="M1.500 5.500v-5h4v5M0 5.500h8M4.500 6v4M4.500 0v5"/></svg></div>
<div class="pt"><div class="pa"><b><svg class="i"><use href="#tick"/></svg></b><b><svg class="i"><use href="#abl"/></svg></b><b><svg class="i"><use href="#prop"/></svg></b></div><div class="pb"><b><svg class="i"><use href="#rx"/></svg></b><b><svg class="i"><use href="#flp"/></svg></b></div></div>
<div class="tree">
<svg class="guides" width="120" height="290"><path fill="none" stroke="#888" stroke-dasharray="1 1" d="M14 8.500H20M28.500 17V104M33 24.500H38M29 88.500H38M33 104.500H38M47.500 32V56M52 40.500H57M52 56.500H57M66.500 64V72.500H75M47.500 113V264.500M48 120.500H57M48 136.500H57M48 152.500H57M48 168.500H57M48 184.500H57M48 200.500H57M48 216.500H57M48 232.500H57M48 248.500H57M48 264.500H57"/></svg>
<p class="l0 red"><i class="ex">−</i>New Project1</p>
<p class="l1"><i class="ex">−</i><i class="ck"></i><svg class="i"><use href="#fl"/></svg>Building 1</p>
<p class="l2 grey2"><i class="ex">+</i><i class="ck c g"></i><svg class="i"><use href="#flg"/></svg>Ground floor</p>
<p class="l2 grey2"><i class="ex">−</i><i class="ck c g"></i><svg class="i"><use href="#flg"/></svg>1. Upper floor</p>
<p class="l4 grey2"><i class="ck g"></i><svg class="i"><use href="#page"/></svg>Floor plan</p>
<p class="l3"><i class="ck"></i><svg class="i"><use href="#page"/></svg>Environment</p>
<p class="l1"><i class="ex">−</i>Views</p>
<p class="v"><i class="ck c"></i><svg class="i"><use href="#t3"/></svg>New Project1 : 3D-Vie</p>
<p class="v"><i class="ck"></i><svg class="i"><use href="#t2"/></svg>New Project1 : 2D Vie</p>
<p class="v"><i class="ck c"></i><svg class="i"><use href="#sl"/></svg>New Project1 : Sectio</p>
<p class="v"><i class="ck c"></i><svg class="i"><use href="#sl"/></svg>New Project1 : Sectio</p>
<p class="v"><i class="ck c"></i><svg class="i"><use href="#sl"/></svg>New Project1 : Sectio</p>
<p class="v"><i class="ck c"></i><svg class="i"><use href="#sl"/></svg>New Project1 : Sectio</p>
<p class="v"><i class="ck c"></i><svg class="i"><use href="#t2"/></svg>New Project1 : 2D Vie</p>
<p class="v"><i class="ck c"></i><svg class="i"><use href="#t2"/></svg>New Project1 : 2D Vie</p>
<p class="v"><i class="ck c"></i><svg class="i"><use href="#t2"/></svg>New Project1 : 2D Vie</p>
<p class="v red"><i class="ck c"></i><svg class="i"><use href="#lay"/></svg>New Project1 : Plan 1</p>
<div class="sb"><b><i class="al"></i></b><b class="th"></b><b class="rt"><i class="ar"></i></b></div>
</div>
<div class="tabs"><span><svg class="i"><use href="#folder"/></svg>Catalog</span><span class="act"><svg class="i"><use href="#org"/></svg>Projects</span><span><svg class="i"><use href="#bill"/></svg>Bill of qu...</span></div>
</aside>
</main>

<div class="status"><span class="s0"></span><span>x: 73.3403</span><span>y: 163.9805</span><span>z: 0.00</span></div>

<footer>
<div class="start"><svg class="i"><use href="#flag"/></svg>Start</div><i class="tsep"></i>
<div class="q1"><svg class="i"><use href="#expl"/></svg><svg class="i"><use href="#chrome"/></svg><svg class="i"><use href="#wmp"/></svg><svg class="i"><use href="#p4"/></svg></div>
<div class="apps"><b class="r"><svg class="i"><use href="#ff"/></svg></b><b><svg class="i"><use href="#ie"/></svg></b><b class="r"><svg class="i"><use href="#skype"/></svg></b><b class="r"><svg class="i"><use href="#fz"/></svg></b><b class="r"><svg class="i"><use href="#paint"/></svg></b><b class="r"><svg class="i"><use href="#pdf"/></svg></b><b class="cur"><svg class="i"><use href="#app"/></svg></b><b class="r sn"><svg class="i"><use href="#snip"/></svg></b><b class="r edge"></b></div>
<div class="links"><span>Desktop</span><svg class="i"><use href="#expl"/></svg><span class="lib">Libraries</span><span class="chev">»</span></div>
<div class="tray"><svg class="i"><use href="#steam"/></svg><svg class="i"><use href="#gchk"/></svg><svg class="i"><use href="#red"/></svg><svg class="i"><use href="#wu"/></svg><svg class="i"><use href="#usb"/></svg><svg class="i"><use href="#g1"/></svg><svg class="i"><use href="#bird"/></svg><svg class="i"><use href="#up"/></svg><svg class="i"><use href="#kb"/></svg><svg class="i"><use href="#drv"/></svg><svg class="i"><use href="#vv"/></svg><svg class="i"><use href="#bsq"/></svg><svg class="i"><use href="#nv"/></svg><svg class="i"><use href="#fx"/></svg><svg class="i"><use href="#sig"/></svg><svg class="i"><use href="#spk"/></svg><span>17:25</span><svg class="i dk"><use href="#desk"/></svg></div>
</footer>
</body>
</html>
```
FILE: styles.css
```css
*{box-sizing:border-box}
html,body{margin:0;height:1200px;width:1920px;overflow:hidden}
body{display:flex;flex-direction:column;background:#d4d0c8;font:11px/14px "DejaVu Sans Condensed","DejaVu Sans",sans-serif;font-stretch:condensed;color:#000;position:relative}
b,i,em{font-style:normal;font-weight:400;display:block;flex:none}
.sprite{position:absolute}
.i{width:16px;height:16px;flex:none;display:block;overflow:visible}
symbol{overflow:visible}
symbol path[stroke]:not([fill]){fill:none}
.it{font:bold 11px "Liberation Sans",Arial,sans-serif}
.q{font:bold 13px "Liberation Sans",sans-serif;fill:#00f}
.m{font:8px "Liberation Sans",sans-serif}
.A{font:bold 21px "Liberation Serif",serif}
.ab{font:9px "Liberation Sans",sans-serif}
.w{font:bold 11px "Liberation Sans",sans-serif;fill:#fff}
.s{font:bold 6px "Liberation Sans",sans-serif;fill:#fff}

.title{height:24px;flex:none;display:flex;align-items:center;padding:0 2px 1px 4px;background:linear-gradient(90deg,#0a246a,#a6caf0);color:#fff;font-weight:700}
.cap{margin-left:5px;white-space:nowrap;flex:none;letter-spacing:.104px}
.wb{display:flex;margin-left:auto}
.wb b{width:16px;height:19px;background:#d4d0c8;border:1px solid;border-color:#fff #404040 #404040 #fff;box-shadow:inset -1px -1px #808080;display:grid;place-items:center}
.wb .cl{margin-left:3px}

.bars{height:100px;flex:none;position:relative;background:linear-gradient(90deg,#d7d3ca,#f5f4f2)}
.menu{height:23px;display:flex;align-items:center;padding-left:3px}
.menu span{margin-right:11px}
.mi{width:16px;height:16px;margin:2px 4px 0 0}
.grip + .mi{margin-left:1px}
.mdi{margin-left:auto;display:flex;gap:2px;padding-top:2px}
.grip{width:7px;height:16px;flex:none;background:radial-gradient(circle at 1.500px 1.500px,#8d8a83 1px,transparent 1.200px) 1px 0/4px 4px repeat-y}
.g2{margin-left:3px;width:8px;margin-right:-1px}
.g3{margin:0 1px 0 4px;width:6px}
.g4{margin:0 0 0 6px}
.tb{width:max-content;height:24px;display:flex;align-items:center;padding-left:3px;margin-bottom:2px;background:linear-gradient(#f7f6f3,#eceae5 60%,#dddad3);border-bottom:1px solid #b0aca4;border-radius:0 2px 2px 0}
.t3{height:25px;margin:0}
.tb b,.vt b{width:22px;height:22px;display:grid;place-items:center}
.tb .on,.vt .on{border:1px solid #0a246a;background:#d2d5de}
.hot{background:#d5d9e2}
.big{width:20px;height:20px}
.sep{width:6px;height:16px;background:linear-gradient(#9b9890,#9b9890) 2px 0/1px 16px no-repeat}
.dd{width:9px;height:3px;background:#000;clip-path:polygon(2px 0,7px 0,4.500px 3px)}
.off{background:#888}
.navy{color:#000070}.dim{color:#999}.flip{transform:scaleX(-1)}
.combo{width:112px;height:19px;background:#d4d0c8;display:flex;justify-content:flex-end;margin-right:1px}
.combo em{width:14px;background:#e5e3de;border:1px solid #fff;display:grid;place-items:center}
.combo .dd{background:#888}
.w1{width:79px;padding-left:4px;white-space:nowrap;letter-spacing:.13px}
.w2{width:114px;padding-left:3px;white-space:nowrap;letter-spacing:.12px}
.pointer{position:absolute;left:891px;top:54px}

main{height:1032px;flex:none;display:flex;background:linear-gradient(90deg,#d4d0c8 1905px,#dfdcd6 1905px)}
.vt{width:34px;height:354px;margin-left:2px;padding-left:5px;background:linear-gradient(90deg,#f5f4f1,#dedbd4);border-right:1px solid #aaa69e;flex:none}
.vt>div{height:22px;display:flex;align-items:center;gap:3px}
.vt>div>b{margin-left:1px}
.vt hr{margin:1px 6px 2px 5px;border:0;background:#999;width:15px;height:2px}
.vt .sh{padding-left:4px}
.hgrip{height:10px;width:27px;background:radial-gradient(circle at 1.500px 1.500px,#8d8a83 1px,transparent 1.200px) 0 3px/4px 4px repeat-x}
.v2{width:24px;height:32px;margin:0 1px 0 3px;padding:0 1px;border:0}
.v2 .hgrip{width:16px;margin-left:3px}
.canvas{width:1617px;height:1030px;margin-left:0;border:solid;border-width:2px 1px 1px 2px;border-color:#555 #eee #eee #555;background:#fff;flex:none}
.draw{display:block;fill:none;stroke:#000;stroke-width:3;shape-rendering:crispEdges}
.lt{stroke:#e0e0e0}.mid{stroke:#a8a8a8}.grey{stroke:#a8a8a8}

.panel{width:224px;padding-left:5px;display:flex;flex-direction:column;border-left:1px solid #eee;flex:none;background:#d4d0c8;font:11px/16px "Liberation Sans",Arial,sans-serif;font-stretch:normal}
.ph{height:18px;display:flex;align-items:center;gap:2px;font-size:12px;letter-spacing:-.2px;padding-bottom:1px}
.ph .pin{margin:2px 13px 0 auto}
.ph .i{width:15px}
.pt{height:27px;display:flex;background:#efedea;margin-left:-1px}
.pa,.pb{display:flex;background:linear-gradient(#f5f4f1,#d9d6ce);height:25px;align-items:center;padding:0 2px;border-bottom:1px solid #aaa}
.pb{margin-left:1px;padding:0 1px}
.pt b{width:21.600px;display:grid;place-items:center}
.tree{position:relative;width:210px;height:962px;border:1px solid #404040;border-right-color:#fff;border-bottom-color:#fff;background:#fff;display:flex;flex-direction:column}
.guides{position:absolute;left:-1px;top:-1px}
.tree p{margin:0;height:16px;display:flex;align-items:center;white-space:pre;position:relative}
.red{color:#d9504f}.grey2{color:#858585}
.ex{width:9px;height:9px;border:1px solid #808080;background:#fff;font:9px/7px "Liberation Sans",sans-serif;text-align:center;color:inherit;letter-spacing:0}
.l0{padding-left:5px}.l0 .ex{margin-right:8px}
.l1{padding-left:24px}.l1 .ex{margin-right:8px}
.l2{padding-left:43px}.l2 .ex{margin-right:8px}
.l3{padding-left:41px}.l4{padding-left:79px}.v{padding-left:60px}
.ck{width:12px;height:12px;border:solid;border-width:2px 1px 1px 2px;border-color:#555 #ddd #ddd #555;background:#fff;margin-right:2px;position:relative}
.g{background:#d4d0c8}
.c::after{content:"";position:absolute;left:1px;top:0;width:6px;height:3px;border:solid #000;border-width:0 0 2px 2px;transform:rotate(-48deg)}
.g::after{border-color:#808080}
.tree .i{margin-right:5px}
.sb{margin-top:auto;height:16px;display:flex;background:#e9e7e3}
.sb b{width:16px;height:16px;background:#d4d0c8;border:1px solid;border-color:#fff #555 #555 #fff;display:grid;place-items:center}
.sb .th{width:105px}.sb .rt{margin-left:auto}
.al,.ar{width:4px;height:8px;background:#000;clip-path:polygon(100% 0,100% 100%,0 50%)}
.ar{clip-path:polygon(0 0,0 100%,100% 50%)}
.tabs{display:flex;height:20px;margin-top:3px;width:210px;border-top:1px solid #555;font-size:12px;color:#8b8881;white-space:nowrap;letter-spacing:-.1px}
.tabs span{display:flex;align-items:center;gap:3px;width:68px;padding:0 0 1px 4px}
.tabs .act{color:#000;border:solid;border-width:0 1px 1px;border-color:#fff #555 #555 #fff;padding:0 0 0 1px;width:66px}
.tabs span+span+span{width:75px;padding-left:3px;height:18px;border-right:1px solid #888}

.status{height:14px;flex:none;display:flex;gap:3px}
.status span{flex:none;width:79px;border:1px solid #707070;border-right-color:#999;padding-left:2px;font:12px/12px "Liberation Sans",Arial,sans-serif;letter-spacing:-.25px}
.status .s0{width:1673px}

footer{height:30px;flex:none;display:flex;align-items:center;border-top:1px solid #fff;padding:2px 5px 2px 3px}
.start{width:52px;height:22px;display:flex;align-items:center;gap:1px;padding-left:1px;font-weight:700;border:1px solid;border-color:#fff #404040 #404040 #fff;box-shadow:inset -1px -1px #808080}
.tsep{width:3px;height:20px;margin-left:8px;border-left:1px solid #fff;border-right:1px solid #888;background:#fff}
.q1{display:flex;gap:18px;margin-left:16px}
.apps{display:flex;gap:2px;margin-left:10px}
.apps b{width:32px;height:22px;display:grid;place-items:center}
.r{border:1px solid;border-color:#fff #404040 #404040 #fff;box-shadow:inset -1px -1px #808080}
.cur{background:#fff;border:1px solid;border-color:#404040 #fff #fff #404040}
.apps .sn{width:29px}.apps .edge{width:3px;margin-left:-2px}
.links{margin-left:auto;display:flex;align-items:center;height:22px;border-left:1px solid #888;box-shadow:inset 1px 0 #fff;padding-left:5px;width:162px}
.links .i{margin:0 3px 0 7px}
.chev{margin:0 5px 6px auto;font-weight:700;font-size:14px}
.tray{width:447px;height:23px;border:1px solid;border-color:#808080 #fff #fff #808080;display:flex;align-items:center;gap:8px;padding-left:5px}
.tray span{margin-left:7px;width:27px}
.dk{margin-left:-1px}
```
